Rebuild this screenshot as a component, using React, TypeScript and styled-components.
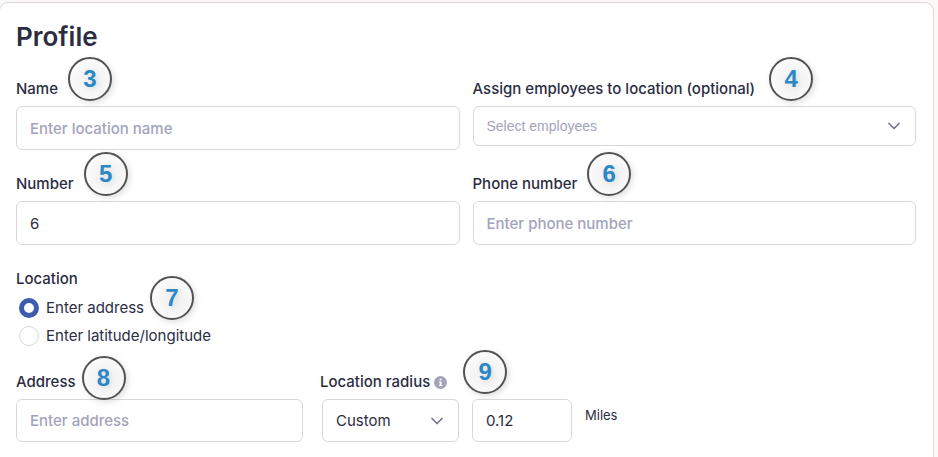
import React from "react";
import styled, { createGlobalStyle } from "styled-components";

const GlobalStyle = createGlobalStyle`
  *, *::before, *::after { box-sizing: border-box; }
  body {
    margin: 0;
    background: #faf9f8;
    color: #2b2d42;
    font-family: Inter, "Liberation Sans", sans-serif;
    font-size: 15px;
  }
`;

const Card = styled.main`
  min-height: calc(100vh + 16px);
  margin: 2px 4px 0 -1px;
  padding: 16px 17px 16px 16px;
  background: #fff;
  border: 1px solid #dcd6d8;
  border-radius: 9px;
`;

const Page = styled.div`
  height: 100vh;
  overflow: hidden;
  display: flow-root;
`;

const Title = styled.h1`
  margin: 0;
  font-size: 26px;
  font-weight: 600;
  line-height: 36px;
`;

const FieldGrid = styled.div`
  display: grid;
  grid-template-columns: 1fr 1fr;
  column-gap: 13px;
  row-gap: 22px;
  margin-top: 22px;
`;

const Field = styled.div`
  min-width: 0;
`;

const LabelRow = styled.div`
  display: flex;
  align-items: center;
  height: 24px;
  margin-bottom: 5px;
`;

const Anchor = styled.div`
  position: relative;
  display: flex;
  align-items: center;
  gap: 4px;
`;

const Label = styled.label`
  font-weight: 500;
  line-height: 24px;
  white-space: nowrap;
`;

const StepBadge = styled.span<{ $gap: number; $rise: number }>`
  position: absolute;
  z-index: 1;
  left: calc(100% + ${(p) => p.$gap}px);
  top: calc(50% - 22px - ${(p) => p.$rise}px);
  display: flex;
  align-items: center;
  justify-content: center;
  width: 44px;
  height: 44px;
  border: 2px solid #525252;
  border-radius: 50%;
  background: radial-gradient(circle at 55% 55%, #f0f0f0 0, #f6f6f6 45%, #fcfcfc 75%);
  box-shadow: 2px 2px 6px rgba(0, 0, 0, 0.13);
  color: #2b88c6;
  font-family: "Liberation Sans", Arial, sans-serif;
  font-size: 24px;
  font-weight: 700;
  line-height: 1;
  text-shadow: 2px 2px 5px rgba(0, 0, 0, 0.08);
`;

const TextInput = styled.input<{ $compact?: boolean }>`
  display: block;
  width: 100%;
  height: ${(p) => (p.$compact ? 43 : 44)}px;
  padding: 0 13px;
  border: 1px solid #dcd6d8;
  border-radius: 6px;
  background: #fff;
  color: inherit;
  font: inherit;
  outline: none;

  &::placeholder {
    color: #a3a4bc;
    font-weight: 500;
    opacity: 1;
  }
`;

const SelectBox = styled.div`
  position: relative;
`;

const Select = styled.select<{ $placeholder?: boolean }>`
  display: block;
  appearance: none;
  width: 100%;
  height: ${(p) => (p.$placeholder ? 40 : 43)}px;
  padding: 0 40px 0 13px;
  border: 1px solid #dcd6d8;
  border-radius: 6px;
  background: #fff;
  color: ${(p) => (p.$placeholder ? "#a3a4bc" : "inherit")};
  font-family: ${(p) => (p.$placeholder ? '"Liberation Sans", Arial, sans-serif' : "inherit")};
  font-size: ${(p) => (p.$placeholder ? 14 : 15)}px;
  outline: none;
`;

const ChevronIcon = styled.svg`
  position: absolute;
  right: 16px;
  top: 50%;
  width: 12px;
  height: 8px;
  margin-top: -4px;
  fill: none;
  stroke: #77728f;
  stroke-width: 1.7;
  stroke-linecap: round;
  stroke-linejoin: round;
  pointer-events: none;
`;

const InfoIcon = styled.svg`
  width: 13px;
  height: 13px;
`;

const RadioGroup = styled.fieldset`
  margin: 22px 0 0;
  padding: 0;
  border: 0;
`;

const Legend = styled.legend`
  margin-bottom: 3px;
  padding: 0;
  font-weight: 500;
  line-height: 24px;
`;

const RadioRow = styled.div`
  display: flex;
  align-items: center;
  height: 28px;
  padding-left: 3px;
`;

const Radio = styled.input`
  appearance: none;
  width: 20px;
  height: 20px;
  margin: 0 7px 0 0;
  border: 1px solid #dcd6d8;
  border-radius: 50%;
  background: #fff;

  &:checked {
    border: 5px solid #3c5dae;
  }
`;

const RadioLabel = styled.label`
  line-height: 24px;
  white-space: nowrap;
`;

const AddressRow = styled.div`
  display: flex;
  gap: 17px;
  margin-top: 20px;
`;

const AddressField = styled.div`
  flex: 0 1 287px;
  min-width: 0;
`;

const RadiusControls = styled.div`
  display: flex;
  gap: 13px;
  padding-left: 2px;
`;

const RadiusSelect = styled(SelectBox)`
  width: 137px;
`;

const RadiusInput = styled(TextInput)`
  width: 100px;
`;

const Unit = styled.span`
  padding-top: 8px;
  font-size: 13px;
  line-height: 16px;
`;

const Chevron = () => (
  <ChevronIcon viewBox="0 0 12 8" aria-hidden="true">
    <path d="M1 1.5 6 6.5 11 1.5" />
  </ChevronIcon>
);

type StepProps = { n: number; gap?: number; rise?: number };

const Step = ({ n, gap = 10, rise = 10 }: StepProps) => (
  <StepBadge $gap={gap} $rise={rise}>{n}</StepBadge>
);

export default function App() {
  return (
    <Page>
      <GlobalStyle />
      <Card>
        <Title>Profile</Title>
        <FieldGrid>
          <Field>
            <LabelRow>
              <Anchor>
                <Label htmlFor="name">Name</Label>
                <Step n={3} />
              </Anchor>
            </LabelRow>
            <TextInput id="name" placeholder="Enter location name" />
          </Field>
          <Field>
            <LabelRow>
              <Anchor>
                <Label htmlFor="employees">Assign employees to location (optional)</Label>
                <Step n={4} gap={14} />
              </Anchor>
            </LabelRow>
            <SelectBox>
              <Select id="employees" $placeholder defaultValue="">
                <option value="">Select employees</option>
              </Select>
              <Chevron />
            </SelectBox>
          </Field>
          <Field>
            <LabelRow>
              <Anchor>
                <Label htmlFor="number">Number</Label>
                <Step n={5} />
              </Anchor>
            </LabelRow>
            <TextInput id="number" defaultValue="6" />
          </Field>
          <Field>
            <LabelRow>
              <Anchor>
                <Label htmlFor="phone">Phone number</Label>
                <Step n={6} />
              </Anchor>
            </LabelRow>
            <TextInput id="phone" type="tel" placeholder="Enter phone number" />
          </Field>
        </FieldGrid>

        <RadioGroup>
          <Legend>Location</Legend>
          <RadioRow>
            <Radio type="radio" id="by-address" name="location" defaultChecked />
            <Anchor>
              <RadioLabel htmlFor="by-address">Enter address</RadioLabel>
              <Step n={7} gap={6} />
            </Anchor>
          </RadioRow>
          <RadioRow>
            <Radio type="radio" id="by-coords" name="location" />
            <RadioLabel htmlFor="by-coords">Enter latitude/longitude</RadioLabel>
          </RadioRow>
        </RadioGroup>

        <AddressRow>
          <AddressField>
            <LabelRow>
              <Anchor>
                <Label htmlFor="address">Address</Label>
                <Step n={8} gap={6} rise={4} />
              </Anchor>
            </LabelRow>
            <TextInput id="address" $compact placeholder="Enter address" />
          </AddressField>
          <Field>
            <LabelRow>
              <Anchor>
                <Label htmlFor="radius">Location radius</Label>
                <InfoIcon viewBox="0 0 13 13" aria-hidden="true">
                  <circle cx="6.5" cy="6.5" r="6.5" fill="#a3a4bc" />
                  <path d="M5.600 2.700h1.900v1.600H5.600zM5 5.400h2.500v3.500h.8v1.200H4.900V8.900h.8V6.600H5z" fill="#fff" />
                </InfoIcon>
                <Step n={9} gap={16} />
              </Anchor>
            </LabelRow>
            <RadiusControls>
              <RadiusSelect>
                <Select id="radius" defaultValue="custom">
                  <option value="custom">Custom</option>
                </Select>
                <Chevron />
              </RadiusSelect>
              <RadiusInput $compact defaultValue="0.12" aria-label="Radius in miles" />
              <Unit>Miles</Unit>
            </RadiusControls>
          </Field>
        </AddressRow>
      </Card>
    </Page>
  );
}
